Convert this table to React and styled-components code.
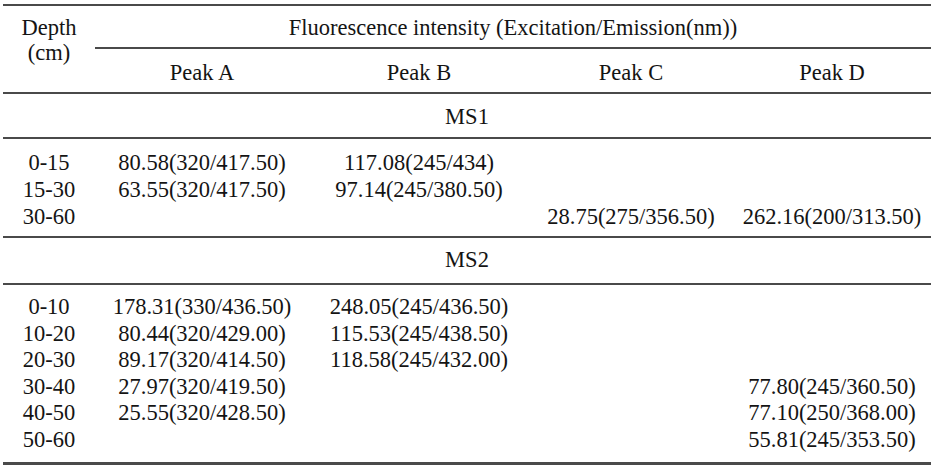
import React from "react";
import styled, { createGlobalStyle } from "styled-components";

const GlobalStyle = createGlobalStyle`
  html, body {
    margin: 0;
    padding: 0;
    background: #ffffff;
  }
  body {
    font-family: "Liberation Serif", serif;
    color: #141414;
  }
`;

const COLUMNS = "92px 214px 220px 204px 198px";
const LINE = "#4a4a4a";

const Page = styled.div`
  padding: 4px 0 0 3px;
  width: 928px;
`;

const Table = styled.div`
  width: 928px;
  border-top: 2px solid ${LINE};
  border-bottom: 3px solid ${LINE};
  font-family: "Liberation Serif", "DejaVu Serif", serif;
  font-size: 22.5px;
`;

const Header = styled.div`
  display: grid;
  grid-template-columns: ${COLUMNS};
  grid-template-rows: auto auto;
  border-bottom: 2px solid ${LINE};
`;

const DepthHead = styled.div`
  grid-row: 1 / span 2;
  grid-column: 1;
  padding-top: 9px;
  line-height: 25px;
  text-align: center;
`;

const SpanHead = styled.div`
  grid-row: 1;
  grid-column: 2 / span 4;
  padding: 9px 0 6px;
  line-height: 26px;
  text-align: center;
  border-bottom: 2px solid ${LINE};
`;

const PeakHead = styled.div`
  grid-row: 2;
  padding: 11px 0 6px;
  line-height: 26px;
  text-align: center;
`;

const SiteRow = styled.div`
  padding: ${(p) => p.$pad};
  line-height: 26px;
  text-align: center;
  border-bottom: 2px solid ${LINE};
`;

const Group = styled.div`
  padding: ${(p) => p.$pad};
  border-bottom: ${(p) => (p.$last ? "none" : `2px solid ${LINE}`)};
`;

const Row = styled.div`
  display: grid;
  grid-template-columns: ${COLUMNS};
  line-height: ${(p) => p.$lh}px;
  white-space: nowrap;
`;

const Cell = styled.div`
  text-align: center;
`;

const groups = [
  {
    site: "MS1",
    sitePad: "10px 0 7px",
    pad: "10px 0 6px",
    lh: 27,
    rows: [
      ["0-15", "80.58(320/417.50)", "117.08(245/434)", "", ""],
      ["15-30", "63.55(320/417.50)", "97.14(245/380.50)", "", ""],
      ["30-60", "", "", "28.75(275/356.50)", "262.16(200/313.50)"],
    ],
  },
  {
    site: "MS2",
    sitePad: "9px 0 10px",
    pad: "9px 0 8px",
    lh: 26.6,
    last: true,
    rows: [
      ["0-10", "178.31(330/436.50)", "248.05(245/436.50)", "", ""],
      ["10-20", "80.44(320/429.00)", "115.53(245/438.50)", "", ""],
      ["20-30", "89.17(320/414.50)", "118.58(245/432.00)", "", ""],
      ["30-40", "27.97(320/419.50)", "", "", "77.80(245/360.50)"],
      ["40-50", "25.55(320/428.50)", "", "", "77.10(250/368.00)"],
      ["50-60", "", "", "", "55.81(245/353.50)"],
    ],
  },
];

export default function App() {
  return (
    <Page>
      <GlobalStyle />
      <Table>
        <Header>
          <DepthHead>
            Depth
            <br />
            (cm)
          </DepthHead>
          <SpanHead>Fluorescence intensity (Excitation/Emission(nm))</SpanHead>
          {["Peak A", "Peak B", "Peak C", "Peak D"].map((p) => (
            <PeakHead key={p}>{p}</PeakHead>
          ))}
        </Header>

        {groups.map((g) => (
          <React.Fragment key={g.site}>
            <SiteRow $pad={g.sitePad}>{g.site}</SiteRow>
            <Group $pad={g.pad} $last={g.last}>
              {g.rows.map((r) => (
                <Row key={r[0]} $lh={g.lh}>
                  {r.map((c, i) => (
                    <Cell key={i}>{c}</Cell>
                  ))}
                </Row>
              ))}
            </Group>
          </React.Fragment>
        ))}
      </Table>
    </Page>
  );
}
